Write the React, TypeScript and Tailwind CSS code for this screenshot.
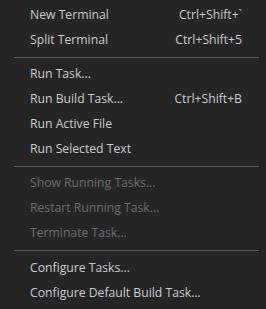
import React from "react";

type Item =
  | { type: "item"; label: string; shortcut?: string; disabled?: boolean }
  | { type: "sep"; last?: boolean };

const items: Item[] = [
  { type: "item", label: "New Terminal", shortcut: "Ctrl+Shift+`" },
  { type: "item", label: "Split Terminal", shortcut: "Ctrl+Shift+5" },
  { type: "sep" },
  { type: "item", label: "Run Task..." },
  { type: "item", label: "Run Build Task...", shortcut: "Ctrl+Shift+B" },
  { type: "item", label: "Run Active File" },
  { type: "item", label: "Run Selected Text" },
  { type: "sep" },
  { type: "item", label: "Show Running Tasks...", disabled: true },
  { type: "item", label: "Restart Running Task...", disabled: true },
  { type: "item", label: "Terminate Task...", disabled: true },
  { type: "sep", last: true },
  { type: "item", label: "Configure Tasks..." },
  { type: "item", label: "Configure Default Build Task..." },
];

export default function App() {
  return (
    <div
      className="w-[266px] h-[309px] bg-[#252526] pt-[2.5px] overflow-hidden"
      style={{ fontFamily: '"Open Sans", "Noto Sans", sans-serif' }}
    >
      {items.map((it, i) =>
        it.type === "sep" ? (
          <div key={i} className={it.last ? "pt-[4px] pb-[5px]" : "py-[4px]"}>
            <div className="ml-[14px] mr-[7px] h-px bg-[#5a5a5a]" />
          </div>
        ) : (
          <div
            key={i}
            className={`h-[25px] flex items-center justify-between pl-[30px] pr-[24px] text-[12.2px] ${
              it.disabled ? "text-[#6e6e6e]" : "text-[#cccccc]"
            }`}
          >
            <span>{it.label}</span>
            {it.shortcut && <span>{it.shortcut}</span>}
          </div>
        )
      )}
    </div>
  );
}
